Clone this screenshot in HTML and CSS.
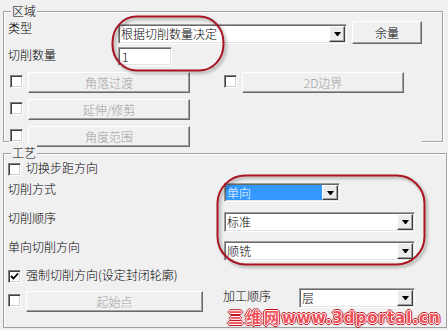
FILE: index.html
```html
<!DOCTYPE html>
<html lang="zh-CN">
<head>
    <meta charset="UTF-8">
    <title>切削参数</title>
    <link rel="stylesheet" href="styles.css">
</head>
<body>
    <div class="dialog">
        <fieldset class="group group-area">
            <legend>区域</legend>
            <div class="row row-type">
                <span class="label">类型</span>
                <div class="combo combo-type">
                    <span class="combo-text">根据切削数量决定</span>
                    <span class="combo-btn"></span>
                </div>
                <button class="btn btn-stock">余量</button>
            </div>
            <div class="row row-count">
                <span class="label">切削数量</span>
                <div class="edit">1</div>
            </div>
            <div class="opt-grid">
                <div class="opt"><span class="check"></span><button class="btn btn-off">角落过渡</button></div>
                <div class="opt"><span class="check"></span><button class="btn btn-off">2D边界</button></div>
                <div class="opt"><span class="check"></span><button class="btn btn-off">延伸/修剪</button></div>
                <div></div>
                <div class="opt"><span class="check"></span><button class="btn btn-off">角度范围</button></div>
            </div>
        </fieldset>

        <fieldset class="group group-tech">
            <legend>工艺</legend>
            <div class="row row-step">
                <span class="check"></span>
                <span class="check-label">切换步距方向</span>
            </div>
            <div class="row row-field">
                <span class="label label-wide">切削方式</span>
                <div class="combo combo-mode">
                    <span class="combo-text sel">单向</span>
                    <span class="combo-btn"></span>
                </div>
            </div>
            <div class="row row-field">
                <span class="label label-wide">切削顺序</span>
                <div class="combo combo-long">
                    <span class="combo-text">标准</span>
                    <span class="combo-btn"></span>
                </div>
            </div>
            <div class="row row-field row-dir">
                <span class="label label-wide">单向切削方向</span>
                <div class="combo combo-long">
                    <span class="combo-text">顺铣</span>
                    <span class="combo-btn"></span>
                </div>
            </div>
            <div class="row row-force">
                <span class="check checked">
                    <svg width="11" height="11" viewBox="0 0 11 11"><polyline points="2,5 4.5,7.5 9,2.5" fill="none" stroke="#000" stroke-width="1.8"/></svg>
                </span>
                <span class="check-label">强制切削方向(设定封闭轮廓)</span>
            </div>
            <div class="row row-start">
                <span class="check"></span>
                <button class="btn btn-off btn-start">起始点</button>
                <span class="label label-order">加工顺序</span>
                <div class="combo combo-order">
                    <span class="combo-text">层</span>
                    <span class="combo-btn"></span>
                </div>
            </div>
        </fieldset>

        <svg class="marks" width="448" height="330" viewBox="0 0 448 330">
            <rect x="112.5" y="16.5" width="111" height="54" rx="24" ry="26"/>
            <rect x="217.5" y="175.5" width="207" height="89" rx="28" ry="28"/>
        </svg>
        <span class="watermark"><span class="wm-cn">三维网</span><span class="wm-en">www.3dportal.cn</span></span>
    </div>
</body>
</html>
```
FILE: styles.css
```css
body {
    margin: 0;
    background: #f0f0f0;
    font-family: "Noto Sans CJK SC", "Noto Sans", sans-serif;
    font-size: 12px;
    font-weight: 300;
    color: #000;
}

.dialog {
    position: relative;
    width: 448px;
    height: 330px;
    padding-top: 3px;
    box-sizing: border-box;
    overflow: hidden;
}

/* group boxes */
.group {
    position: relative;
    box-sizing: border-box;
    margin: 0 0 0 3px;
    padding: 0;
    min-width: 0;
    border: 1px solid #a0a0a0;
    box-shadow: inset 1px 1px 0 #fff, 1px 0 0 #fff;
}

.group legend {
    margin-left: 7px;
    padding: 0 1px;
    font-size: 12px;
    line-height: 16px;
    background: #f0f0f0;
}

.group-area {
    width: 440px;
    height: 139px;
    border-bottom: 0;
}

.group-area::before,
.group-area::after {
    content: "";
    position: absolute;
    bottom: 0;
    height: 1px;
    background: #a0a0a0;
    box-shadow: 0 1px 0 #fff;
}

.group-area::before {
    left: -1px;
    width: 6px;
}

.group-area::after {
    right: -1px;
    width: 21px;
}

.group-tech {
    width: 444px;
    height: 183px;
    margin-top: 3px;
}

/* rows */
.row {
    display: flex;
    align-items: flex-start;
    margin-left: 4px;
}

.label {
    line-height: 14px;
    white-space: nowrap;
}

.row-type {
    height: 27px;
}

.row-type .label {
    width: 110px;
    margin-top: 2px;
}

.row-count {
    height: 22px;
}

.row-count .label {
    width: 110px;
    margin-top: 2px;
}

/* combo box */
.combo {
    box-sizing: border-box;
    display: flex;
    height: 20px;
    padding: 1px;
    border: 1px solid;
    border-color: #a0a0a0 #fff #fff #a0a0a0;
    box-shadow: inset 1px 1px 0 #696969, inset -1px -1px 0 #e3e3e3;
    background: #fff;
}

.combo-text {
    flex: 1;
    padding-left: 1px;
    line-height: 16px;
    white-space: nowrap;
}

.combo-text.sel {
    background: #3399ff;
    color: #fff;
    line-height: 15px;
}

.combo-btn {
    box-sizing: border-box;
    display: flex;
    align-items: center;
    justify-content: center;
    width: 16px;
    border: 1px solid;
    border-color: #fff #404040 #404040 #fff;
    box-shadow: inset -1px -1px 0 #a0a0a0;
    background: #ececec;
}

.combo-btn::after {
    content: "";
    width: 1px;
    height: 0;
    border-top: 4px solid #000;
    border-left: 3px solid transparent;
    border-right: 3px solid transparent;
}

.combo-type {
    width: 229px;
    margin-top: 5px;
}

.combo-mode {
    width: 116px;
    height: 19px;
    margin-top: 1px;
}

.combo-long {
    width: 191px;
    margin-top: 1px;
}

.combo-order {
    width: 116px;
}

.edit {
    box-sizing: border-box;
    width: 54px;
    height: 19px;
    margin-top: 1px;
    padding: 1px 0 0 3px;
    border: 1px solid;
    border-color: #a0a0a0 #fff #fff #a0a0a0;
    box-shadow: inset 1px 1px 0 #696969, inset -1px -1px 0 #e3e3e3;
    background: #fff;
    line-height: 15px;
}

/* buttons */
.btn {
    box-sizing: border-box;
    height: 21px;
    padding: 0;
    border: 1px solid;
    border-color: #fff #696969 #696969 #fff;
    box-shadow: inset -1px -1px 0 #a0a0a0;
    background: #f0f0f0;
    font-family: inherit;
    font-size: 12px;
    font-weight: inherit;
    color: #000;
}

.btn-off {
    color: #a0a0a0;
}

.btn-stock {
    width: 70px;
    height: 23px;
    margin: 2px 0 0 5px;
}

/* check boxes */
.check {
    box-sizing: border-box;
    display: block;
    flex: none;
    width: 13px;
    height: 13px;
    border: 1px solid;
    border-color: #808080 #fff #fff #808080;
    box-shadow: inset 1px 1px 0 #404040, inset -1px -1px 0 #d4d0c8;
    background: #fff;
}

.check svg {
    display: block;
}

.check-label {
    margin-left: 5px;
    line-height: 14px;
    white-space: nowrap;
}

.opt-grid {
    display: grid;
    grid-template-columns: 180px 180px;
    grid-auto-rows: 27px;
    column-gap: 34px;
    margin-left: 6px;
}

.opt {
    display: flex;
    align-items: flex-start;
    gap: 5px;
}

.opt .check {
    margin-top: 7px;
}

.opt .btn {
    width: 162px;
    margin-top: 4px;
}

.row-step {
    height: 21px;
}

.row-step .check,
.row-force .check {
    margin-top: 2px;
}

.row-field {
    height: 29px;
}

.row-dir {
    height: 28px;
}

.label-wide {
    width: 216px;
}

.row-force {
    height: 20px;
}

.row-start .check {
    margin-top: 6px;
}

.btn-start {
    width: 177px;
    margin: 3px 0 0 5px;
}

.label-order {
    width: 76px;
    margin: 1px 0 0 20px;
}

/* annotations drawn over the dialog */
.marks {
    position: absolute;
    top: 0;
    left: 0;
    pointer-events: none;
}

.marks rect {
    fill: none;
    stroke: #a8141f;
    stroke-width: 2;
    filter: drop-shadow(2px 2px 1.5px rgba(0, 0, 0, 0.35));
}

.watermark {
    position: absolute;
    left: 228px;
    top: 306px;
    white-space: nowrap;
    font-weight: bold;
    color: #f0505a;
    text-shadow: 1px 0 #fff, -1px 0 #fff, 0 1px #fff, 0 -1px #fff,
        2px 0 #c0141e, -2px 0 #c0141e, 0 2px #c0141e, 0 -2px #c0141e,
        1px 1px #c0141e, -1px -1px #c0141e, 1px -1px #c0141e, -1px 1px #c0141e;
}

.wm-cn {
    font-size: 15px;
    letter-spacing: 3px;
}

.wm-en {
    font-family: "DejaVu Sans", sans-serif;
    font-size: 15px;
    letter-spacing: 1px;
}
```
